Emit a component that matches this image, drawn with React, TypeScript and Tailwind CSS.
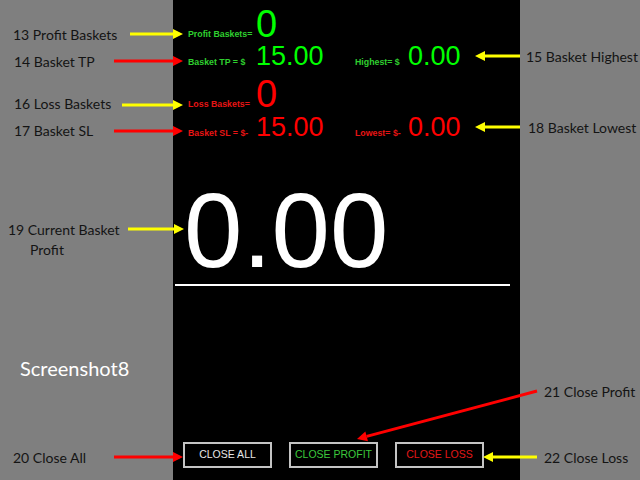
import React from "react";

type Arrow = { x1: number; y1: number; x2: number; y2: number; color: string };

const YELLOW = "#ffff00";
const RED = "#ff0000";

// callout arrows drawn over the gray margins, tip at (x2, y2)
const arrows: Arrow[] = [
  { x1: 130, y1: 34, x2: 183, y2: 34, color: YELLOW },
  { x1: 114, y1: 61, x2: 183, y2: 61, color: RED },
  { x1: 122, y1: 105, x2: 183, y2: 105, color: YELLOW },
  { x1: 114, y1: 131, x2: 183, y2: 131, color: RED },
  { x1: 128, y1: 229, x2: 184, y2: 229, color: YELLOW },
  { x1: 114, y1: 457, x2: 183, y2: 457, color: RED },
  { x1: 520, y1: 56, x2: 475, y2: 56, color: YELLOW },
  { x1: 520, y1: 127, x2: 475, y2: 127, color: YELLOW },
  { x1: 537, y1: 391, x2: 357, y2: 439, color: RED },
  { x1: 537, y1: 457, x2: 483, y2: 457, color: YELLOW },
];

const ArrowShape = ({ x1, y1, x2, y2, color }: Arrow) => {
  const dx = x2 - x1;
  const dy = y2 - y1;
  const len = Math.hypot(dx, dy);
  const ux = dx / len;
  const uy = dy / len;
  const head = 10;
  const half = 5;
  const bx = x2 - ux * head;
  const by = y2 - uy * head;
  const pts = `${x2},${y2} ${bx - uy * half},${by + ux * half} ${bx + uy * half},${by - ux * half}`;
  return (
    <g>
      <line x1={x1} y1={y1} x2={bx} y2={by} stroke={color} strokeWidth={3} />
      <polygon points={pts} fill={color} />
    </g>
  );
};

const Note = ({ children, className }: { children: React.ReactNode; className: string }) => (
  <div className={`h-[20px] flex items-center whitespace-nowrap text-[14px] text-[#141414] ${className}`}>
    {children}
  </div>
);

const StatRow = ({
  label,
  value,
  size,
  tone,
  right,
  className,
}: {
  label: string;
  value: string;
  size: "lg" | "md";
  tone: "green" | "red";
  right?: { label: string; value: string };
  className: string;
}) => {
  const labelColor = tone === "green" ? "text-[#2fd02f]" : "text-[#e81414]";
  const valueColor = tone === "green" ? "text-[#00ff00]" : "text-[#ff0000]";
  const valueSize = size === "lg" ? "text-[38px]" : "text-[27px]";
  return (
    <div className={`flex items-baseline pl-[15px] ${className}`}>
      <div className="flex items-baseline w-[167px]">
        <span className={`w-[68px] shrink-0 text-[8.8px] font-bold ${labelColor}`}>{label}</span>
        <span className={`${valueSize} leading-none ${valueColor}`}>{value}</span>
      </div>
      {right && (
        <div className="flex items-baseline">
          <span className={`w-[53px] shrink-0 text-[8.8px] font-bold ${labelColor}`}>{right.label}</span>
          <span className={`text-[27px] leading-none ${valueColor}`}>{right.value}</span>
        </div>
      )}
    </div>
  );
};

const PanelButton = ({ children, color }: { children: React.ReactNode; color: string }) => (
  <button
    className={`w-[89px] h-[26px] border-2 border-[#c4c4c4] bg-black flex items-center justify-center text-[10.5px] ${color}`}
  >
    {children}
  </button>
);

export default function App() {
  return (
    <div
      className="relative w-[640px] h-[480px] overflow-hidden bg-[#7f7f7f] flex"
      style={{ fontFamily: "Lato, 'Open Sans', sans-serif" }}
    >
      {/* left notes */}
      <div className="w-[173px] shrink-0 flex flex-col">
        <Note className="mt-[24px] pl-[13px]">13 Profit Baskets</Note>
        <Note className="mt-[7px] pl-[14px]">14 Basket TP</Note>
        <Note className="mt-[22px] pl-[14px]">16 Loss Baskets</Note>
        <Note className="mt-[7px] pl-[14px]">17 Basket SL</Note>
        <div className="mt-[80px] flex flex-col text-[14px] text-[#141414] leading-[20px]">
          <span className="pl-[8px]">19 Current Basket</span>
          <span className="pl-[30px]">Profit</span>
        </div>
        <div className="mt-[96px] h-[24px] pl-[20px] flex items-center text-[20px] text-white">Screenshot8</div>
        <Note className="mt-[67px] pl-[13px]">20 Close All</Note>
      </div>

      {/* terminal panel */}
      <div
        className="w-[347px] shrink-0 h-full bg-black flex flex-col pb-[12px]"
        style={{ fontFamily: "'Liberation Sans', Arial, sans-serif" }}
      >
        <StatRow className="mt-[5px]" label="Profit Baskets=" value="0" size="lg" tone="green" />
        <StatRow
          label="Basket TP = $"
          value="15.00"
          size="md"
          tone="green"
          right={{ label: "Highest= $", value: "0.00" }}
          className=""
        />
        <StatRow className="mt-[5px]" label="Loss Baskets=" value="0" size="lg" tone="red" />
        <StatRow
          className="mt-[1px]"
          label="Basket SL = $-"
          value="15.00"
          size="md"
          tone="red"
          right={{ label: "Lowest= $-", value: "0.00" }}
        />
        <div className="mt-[37px] pl-[11px] text-[105px] leading-none text-white">0.00</div>
        <div className="mt-[1px] ml-[2px] w-[335px] h-[2px] bg-white" />
        <div className="mt-auto pl-[10px] flex gap-[17px]">
          <PanelButton color="text-[#e6e6e6]">CLOSE ALL</PanelButton>
          <PanelButton color="text-[#3cc83c]">CLOSE PROFIT</PanelButton>
          <PanelButton color="text-[#e01818]">CLOSE LOSS</PanelButton>
        </div>
      </div>

      {/* right notes */}
      <div className="flex-1 flex flex-col">
        <Note className="mt-[46px] pl-[6px]">15 Basket Highest</Note>
        <Note className="mt-[51px] pl-[8px]">18 Basket Lowest</Note>
        <Note className="mt-[244px] pl-[24px]">21 Close Profit</Note>
        <Note className="mt-[46px] pl-[24px]">22 Close Loss</Note>
      </div>

      <svg className="absolute inset-0 pointer-events-none" width={640} height={480} viewBox="0 0 640 480">
        {arrows.map((a, i) => (
          <ArrowShape key={i} {...a} />
        ))}
      </svg>
    </div>
  );
}
